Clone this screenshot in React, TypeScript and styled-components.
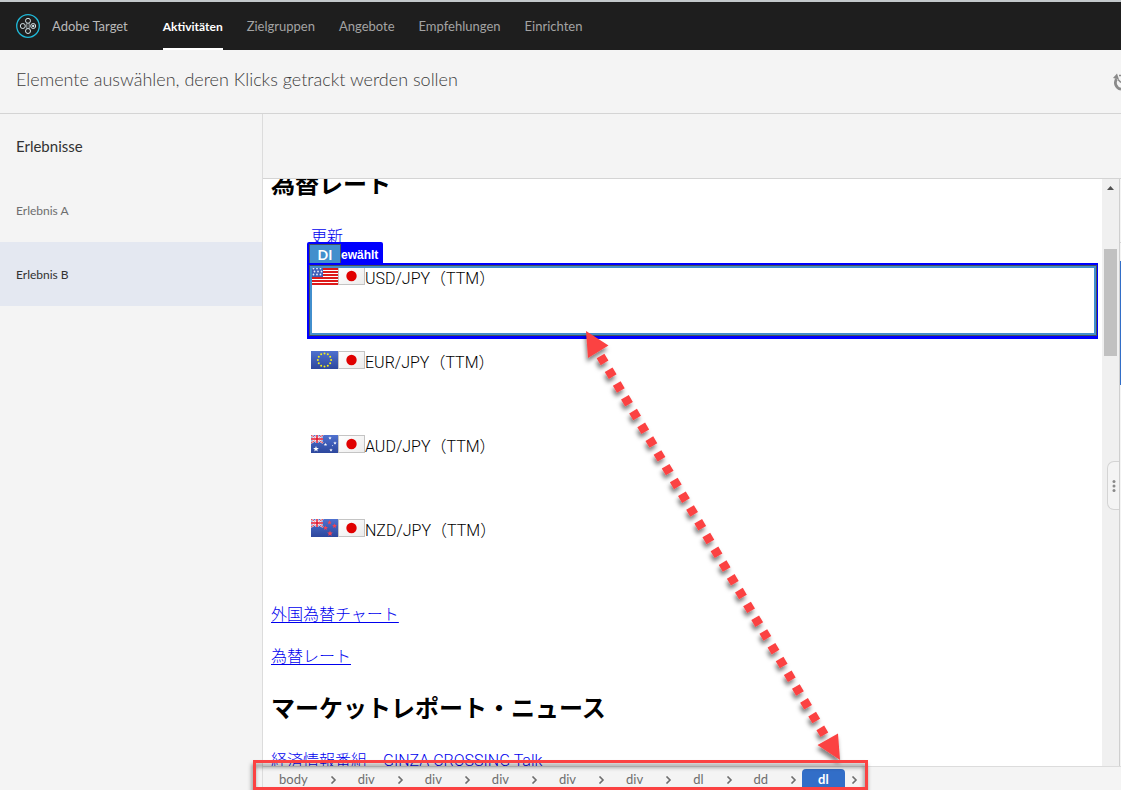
import React from 'react';
import styled, { createGlobalStyle } from 'styled-components';

const uiFont = '"Lato", "Open Sans", sans-serif';
const pageFont = '"Roboto", "Noto Sans CJK JP", sans-serif';

const GlobalStyle = createGlobalStyle`
  *, *::before, *::after { box-sizing: border-box; }
  body { margin: 0; background: #f4f4f4; font-family: ${uiFont}; }
  button { font-family: inherit; cursor: pointer; }
`;

const Shell = styled.div`
  position: relative;
  display: flex;
  flex-direction: column;
  height: 100vh;
  overflow: hidden;
`;

const Header = styled.header`
  display: flex;
  align-items: stretch;
  flex: none;
  height: 50px;
  padding: 0 16px;
  background: #1e1e1e;
  border-top: 2px solid #c3c8cb;
`;

const Brand = styled.a`
  display: flex;
  align-items: center;
  gap: 12px;
  margin-right: 35px;
  color: #b9b9b9;
  font-size: 13px;
  text-decoration: none;
`;

const Nav = styled.nav`
  display: flex;
  gap: 24px;
`;

const NavLink = styled.a<{ $active?: boolean }>`
  display: flex;
  align-items: center;
  padding-top: 2px;
  border-bottom: 2px solid ${p => (p.$active ? '#fff' : 'transparent')};
  color: ${p => (p.$active ? '#fff' : '#a3a3a3')};
  font-size: ${p => (p.$active ? 12 : 13)}px;
  font-weight: ${p => (p.$active ? 700 : 400)};
  text-decoration: none;
`;

const TitleBar = styled.div`
  display: flex;
  align-items: center;
  justify-content: space-between;
  flex: none;
  height: 64px;
  padding: 0 0 6px 16px;
  border-bottom: 1px solid #d4d4d4;
`;

const Title = styled.h1`
  margin: 0;
  color: #3c3c3c;
  font-size: 18px;
  font-weight: 300;
  line-height: 24px;
`;

const ResetButton = styled.button`
  display: flex;
  margin-top: 6px;
  padding: 0;
  border: 0;
  background: none;
`;

const Workspace = styled.div`
  display: flex;
  flex: 1;
  min-height: 0;
`;

const Sidebar = styled.aside`
  flex: none;
  width: 263px;
  border-right: 1px solid #dcdcdc;
`;

const SidebarTitle = styled.h2`
  margin: 0;
  padding: 0 16px;
  color: #323232;
  font-size: 15px;
  font-weight: 400;
  line-height: 64px;
`;

const Experience = styled.button<{ $active?: boolean }>`
  display: block;
  width: 100%;
  height: 64px;
  padding: 0 16px;
  border: 0;
  background: ${p => (p.$active ? '#e4e8f1' : 'transparent')};
  color: ${p => (p.$active ? '#323232' : '#6e6e6e')};
  font-size: 12px;
  text-align: left;
`;

const Editor = styled.main`
  display: flex;
  flex-direction: column;
  flex: 1;
  min-width: 0;
`;

const EditorToolbar = styled.div`
  flex: none;
  height: 65px;
  border-bottom: 1px solid #d4d4d4;
`;

const Stage = styled.div`
  display: flex;
  flex: 1;
  min-height: 0;
`;

const Viewport = styled.div`
  flex: 1;
  min-width: 0;
  overflow: hidden;
  background: #fff;
`;

const Page = styled.article`
  margin-top: -13px;
  padding: 0 8px;
  color: #000;
  font-family: ${pageFont};
  font-size: 16px;
  font-weight: 300;
  line-height: 26px;
`;

const PageHeading = styled.h2`
  margin: 0 0 20px;
  font-size: 24px;
  font-weight: 700;
  line-height: 38px;
`;

const PageLine = styled.p<{ $last?: boolean }>`
  margin: 0 0 ${p => (p.$last ? 20 : 16)}px;
`;

const PageLink = styled.a`
  color: #0000ee;
  text-decoration-thickness: 1px;
  text-underline-offset: 2px;
`;

const Rates = styled.div`
  padding-left: 40px;
`;

const Rate = styled.div`
  position: relative;
  display: flex;
  align-items: flex-start;
  height: 68px;
  margin-bottom: 16px;
`;

const Flags = styled.svg`
  flex: none;
  display: block;
  margin-top: 1px;
`;

const Selection = styled.div`
  position: absolute;
  inset: -3px -4px -5px;
  border: solid #0000fe;
  border-width: 2px 1px 3px 2px;
  pointer-events: none;

  &::before {
    content: '';
    position: absolute;
    inset: 0;
    border: 3px solid #428fcd;
    outline: 1px solid #46505c;
    outline-offset: -1px;
  }
`;

const SelectionLabel = styled.div`
  position: absolute;
  left: -4px;
  bottom: 100%;
  display: flex;
  align-items: flex-start;
  height: 24px;
  padding: 2px 5px 0 2px;
  border-radius: 2px 2px 0 0;
  background: #0000fe;
  color: #fff;
  font-family: "Liberation Sans", Arial, sans-serif;
  font-size: 12px;
  font-weight: 700;
  line-height: 22px;
`;

const TagName = styled.span`
  width: 32px;
  height: 24px;
  border: 1px solid #46505c;
  border-bottom: 0;
  background: #428fcd;
  font-family: ${uiFont};
  font-size: 14px;
  line-height: 20px;
  text-align: center;
`;

const Scrollbar = styled.div`
  position: relative;
  display: flex;
  flex-direction: column;
  align-items: center;
  flex: none;
  width: 17px;
  background: #f0f0f0;
`;

const ScrollUp = styled.button`
  width: 17px;
  height: 17px;
  padding: 0;
  border: 0;
  background: none;
  line-height: 0;
`;

const Thumb = styled.div`
  width: 13px;
  height: 107px;
  margin-top: 53px;
  background: #c1c1c1;
`;

const PanelHandle = styled.button`
  position: absolute;
  top: 282px;
  right: 0;
  display: flex;
  align-items: center;
  justify-content: center;
  width: 12px;
  height: 49px;
  padding: 0;
  border: 1px solid #d4d4d4;
  border-right: 0;
  border-radius: 7px 0 0 7px;
  background: #f4f4f4;
`;

const SidePanel = styled.div`
  flex: none;
  width: 2px;
  padding-top: 63px;
  border-left: 1px solid #cfcfcf;
`;

const SidePanelHead = styled.div`
  height: 19px;
  border-top: 1px solid #d4d4d4;
`;

const SidePanelItem = styled.div`
  height: 124px;
  background: #326ec8;
`;

const Breadcrumb = styled.nav`
  display: flex;
  flex: none;
  height: 24px;
  border-top: 1px solid #dcdcdc;
`;

const Path = styled.ol`
  display: flex;
  margin: 0;
  padding: 2px 0 0;
  list-style: none;
`;

const PathItem = styled.li`
  display: flex;
  align-items: center;
`;

const PathButton = styled.button<{ $active?: boolean }>`
  height: 22px;
  padding: 0 16px 2px;
  border: 0;
  border-radius: 4px;
  background: ${p => (p.$active ? '#326ec8' : 'transparent')};
  color: ${p => (p.$active ? '#fff' : '#6e6e6e')};
  font-size: 13px;
  font-weight: ${p => (p.$active ? 700 : 400)};
`;

const Chevron = styled.svg`
  margin: 0 5px 0 6px;
`;

const Annotation = styled.svg`
  position: absolute;
  top: 0;
  left: 0;
  pointer-events: none;
`;

const navItems = ['Aktivitäten', 'Zielgruppen', 'Angebote', 'Empfehlungen', 'Einrichten'];
const pathItems = ['body', 'div', 'div', 'div', 'div', 'div', 'dl', 'dd', 'dl'];
const rates = ['USD', 'EUR', 'AUD', 'NZD'];

const TargetLogo = () => (
  <svg width="24" height="24" viewBox="0 0 24 24" fill="none" aria-hidden="true">
    <circle cx="12" cy="12" r="11.3" stroke="#1fb9d8" strokeWidth="1.3" />
    <g stroke="#d5e3e8" strokeWidth="1">
      <circle cx="12" cy="6.8" r="2.5" />
      <circle cx="12" cy="17" r="2.5" />
      <circle cx="6.8" cy="12" r="2.5" />
      <circle cx="17.2" cy="12" r="2.5" />
      <path d="M10.8 9.300V14.600M13.200 9.300V14.600" strokeWidth="0.700" />
    </g>
    <circle cx="17.2" cy="12" r="1.200" fill="#d5e3e8" />
  </svg>
);

const UnionJack = () => (
  <g>
    <path d="M0 0L12 8M12 0L0 8" stroke="#fff" strokeWidth="2" />
    <path d="M0 0L12 8M12 0L0 8" stroke="#e23a4a" strokeWidth="1" />
    <path d="M6 0V8M0 4H12" stroke="#fff" strokeWidth="3" />
    <path d="M6 0V8M0 4H12" stroke="#e0142c" strokeWidth="1.5" />
  </g>
);

const star = (x: number, y: number, r: number) =>
  Array.from({ length: 10 }, (_, i) => {
    const a = (Math.PI / 5) * i - Math.PI / 2;
    const q = i % 2 ? r * 0.42 : r;
    return `${(x + q * Math.cos(a)).toFixed(2)},${(y + q * Math.sin(a)).toFixed(2)}`;
  }).join(' ');

const auStars = [[19, 3, 1.8], [14.5, 9.5, 1.8], [24, 8, 1.8], [20, 15, 1.8], [5, 14, 3], [21.5, 10.5, 0.8]];
const nzStars = [[18.5, 3.5, 2.4], [14.5, 9, 2.6], [23.5, 7, 2.6], [19, 14.5, 3]];

const CurrencyFlags = ({ code }: { code: string }) => (
  <Flags width="54" height="18" viewBox="0 0 54 18" aria-hidden="true">
    <defs>
      <linearGradient id={`field-${code}`} x1="0" y1="0" x2="0" y2="1">
        <stop offset="0" stopColor="#4f71cf" />
        <stop offset="1" stopColor="#2d479d" />
      </linearGradient>
      <linearGradient id={`paper-${code}`} x1="0" y1="0" x2="1" y2="1">
        <stop offset="0" stopColor="#fff" />
        <stop offset="1" stopColor="#ececec" />
      </linearGradient>
    </defs>
    {code === 'USD' ? (
      <>
        <rect width="27" height="18" fill="#fff" />
        {[1, 4, 7, 10, 13, 16].map(y => (
          <rect key={y} y={y} width="27" height="2" fill="#dd1a1a" />
        ))}
        <rect width="12" height="10" fill="#3d5db8" />
        {[1.5, 4.5, 7.5].map(y =>
          [2.5, 6, 9.5].map(x => <circle key={`${x}-${y}`} cx={x + (y === 4.5 ? 1 : 0)} cy={y} r="0.9" fill="#e8edff" />),
        )}
      </>
    ) : (
      <rect width="27" height="18" fill={`url(#field-${code})`} />
    )}
    {code === 'EUR' &&
      Array.from({ length: 12 }, (_, i) => (
        <circle key={i} cx={13.5 + 6.6 * Math.sin((i * Math.PI) / 6)} cy={9 - 6.6 * Math.cos((i * Math.PI) / 6)} r="1" fill="#f4f018" />
      ))}
    {(code === 'AUD' || code === 'NZD') && <UnionJack />}
    {code === 'AUD' && auStars.map(([x, y, r], i) => <polygon key={i} points={star(x, y, r)} fill="#fff" />)}
    {code === 'NZD' && nzStars.map(([x, y, r], i) => <polygon key={i} points={star(x, y, r)} fill="#f9434f" />)}
    <rect x="27.5" y="0.5" width="26" height="17" fill={`url(#paper-${code})`} stroke="#c4c4c4" />
    <circle cx="40.5" cy="9" r="5.2" fill="#e00000" />
  </Flags>
);

export default function App() {
  return (
    <Shell>
      <GlobalStyle />
      <Header>
        <Brand href="#">
          <TargetLogo />
          Adobe Target
        </Brand>
        <Nav>
          {navItems.map((item, i) => (
            <NavLink key={item} href="#" $active={i === 0}>{item}</NavLink>
          ))}
        </Nav>
      </Header>
      <TitleBar>
        <Title>Elemente auswählen, deren Klicks getrackt werden sollen</Title>
        <ResetButton aria-label="Zurücksetzen">
          <svg width="8" height="18" viewBox="0 0 8 18" fill="none">
            <path d="M3.5 6C1.200 9.500 2.500 15 8 16.200" stroke="#8a8a8a" strokeWidth="2.800" />
            <path d="M0 5L4 .5L6 6.500Z" fill="#8a8a8a" />
            <path d="M6 2.500H8M5 6.500L8 9.500" stroke="#8a8a8a" strokeWidth="1.500" />
          </svg>
        </ResetButton>
      </TitleBar>
      <Workspace>
        <Sidebar>
          <SidebarTitle>Erlebnisse</SidebarTitle>
          <Experience>Erlebnis A</Experience>
          <Experience $active>Erlebnis B</Experience>
        </Sidebar>
        <Editor>
          <EditorToolbar />
          <Stage>
            <Viewport>
              <Page lang="ja">
                <PageHeading>為替レート</PageHeading>
                <Rates>
                  <PageLine><PageLink href="#">更新</PageLink></PageLine>
                  {rates.map((code, i) => (
                    <Rate key={code}>
                      <CurrencyFlags code={code} />
                      <span>{code}/JPY（TTM）</span>
                      {i === 0 && (
                        <>
                          <SelectionLabel><TagName>DI</TagName>ewählt</SelectionLabel>
                          <Selection />
                        </>
                      )}
                    </Rate>
                  ))}
                </Rates>
                <PageLine><PageLink href="#">外国為替チャート</PageLink></PageLine>
                <PageLine $last><PageLink href="#">為替レート</PageLink></PageLine>
                <PageHeading>マーケットレポート・ニュース</PageHeading>
                <PageLine><PageLink href="#">経済情報番組　GINZA CROSSING Talk</PageLink></PageLine>
              </Page>
            </Viewport>
            <Scrollbar>
              <ScrollUp aria-label="Nach oben">
                <svg width="7" height="4" viewBox="0 0 7 4"><path d="M0 4L3.5 0L7 4Z" fill="#505050" /></svg>
              </ScrollUp>
              <Thumb />
              <PanelHandle aria-label="Seitenleiste">
                <svg width="4" height="14" viewBox="0 0 4 14" fill="#8a8a8a">
                  <circle cx="2" cy="2.5" r="1.5" /><circle cx="2" cy="7" r="1.5" /><circle cx="2" cy="11.5" r="1.5" />
                </svg>
              </PanelHandle>
            </Scrollbar>
            <SidePanel>
              <SidePanelHead />
              <SidePanelItem />
            </SidePanel>
          </Stage>
          <Breadcrumb aria-label="Elementpfad">
            <Path>
              {pathItems.map((item, i) => (
                <PathItem key={i}>
                  <PathButton $active={i === pathItems.length - 1}>{item}</PathButton>
                  <Chevron width="7" height="8" viewBox="0 0 7 8" fill="none">
                    <path d="M1.5 .5L5 4L1.5 7.5" stroke="#6e6e6e" strokeWidth="1.6" />
                  </Chevron>
                </PathItem>
              ))}
            </Path>
          </Breadcrumb>
        </Editor>
      </Workspace>
      <Annotation width="900" height="790" viewBox="0 0 900 790" aria-hidden="true">
        <defs>
          <filter id="shadow" x="-5%" y="-5%" width="110%" height="110%">
            <feDropShadow dx="-1" dy="4" stdDeviation="2" floodColor="#000" floodOpacity="0.5" />
          </filter>
        </defs>
        <g filter="url(#shadow)">
          <rect x="254.5" y="761.5" width="612" height="27" fill="none" stroke="#fb4343" strokeWidth="3" />
          <path d="M600.5 356L824.5 735" stroke="#fb4343" strokeWidth="9" strokeDasharray="8 8" />
          <path d="M586 331L608.5 345.5L588 358Z M840 760L838 733.5L817.5 745Z" fill="#fb4343" />
        </g>
      </Annotation>
    </Shell>
  );
}
